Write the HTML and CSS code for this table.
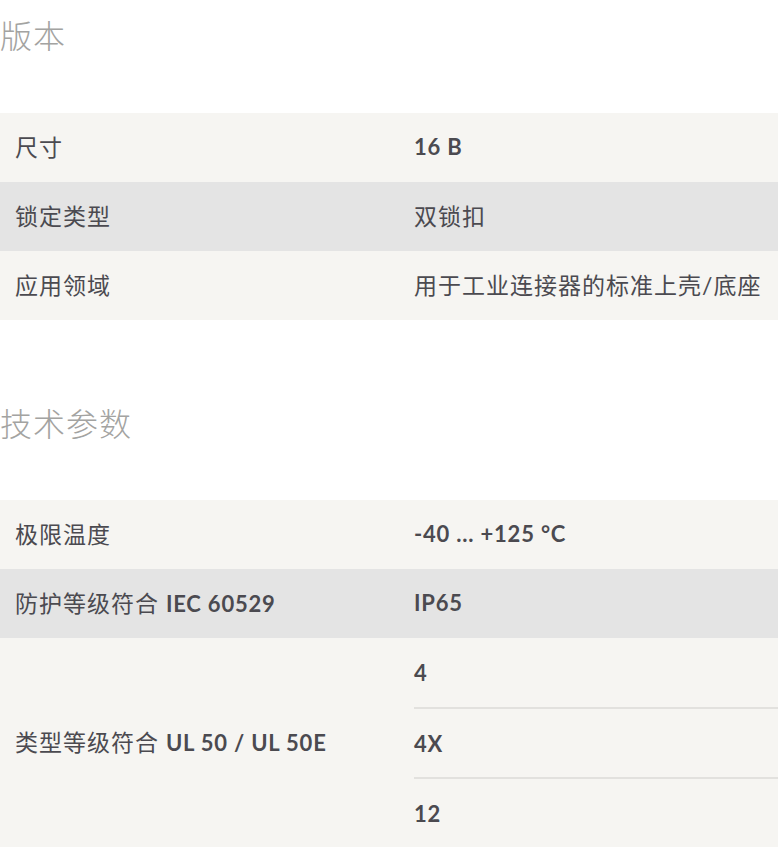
FILE: index.html
```html
<!DOCTYPE html>
<html lang="zh-CN">
<head>
<meta charset="utf-8">
<title>版本 / 技术参数</title>
<link rel="stylesheet" href="styles.css">
</head>
<body>
<section class="section">
  <h2 class="section-title first">版本</h2>
  <div class="spec-table">
    <div class="row odd">
      <div class="label">尺寸</div>
      <div class="value"><span class="lat">16 B</span></div>
    </div>
    <div class="row even">
      <div class="label">锁定类型</div>
      <div class="value">双锁扣</div>
    </div>
    <div class="row odd">
      <div class="label">应用领域</div>
      <div class="value">用于工业连接器的标准上壳/底座</div>
    </div>
  </div>
</section>
<section class="section">
  <h2 class="section-title">技术参数</h2>
  <div class="spec-table">
    <div class="row odd">
      <div class="label">极限温度</div>
      <div class="value"><span class="lat">-40 ... +125 °C</span></div>
    </div>
    <div class="row even">
      <div class="label">防护等级符合 <span class="lat">IEC 60529</span></div>
      <div class="value"><span class="lat">IP65</span></div>
    </div>
    <div class="row odd multi">
      <div class="label">类型等级符合 <span class="lat">UL 50 / UL 50E</span></div>
      <div class="value-list">
        <div class="sub"><span class="lat">4</span></div>
        <div class="sub"><span class="lat">4X</span></div>
        <div class="sub"><span class="lat">12</span></div>
      </div>
    </div>
  </div>
</section>
</body>
</html>
```

FILE: styles.css
```css
html, body {
  margin: 0;
  padding: 0;
  background: #ffffff;
}
body {
  font-family: "Lato", "Noto Sans CJK SC", sans-serif;
  color: #4b4a50;
  font-size: 23px;
  letter-spacing: 1px;
}
.section-title {
  margin: 78px 0 54px;
  font-family: "Noto Sans CJK SC", sans-serif;
  font-weight: 300;
  font-size: 32px;
  line-height: 48px;
  letter-spacing: 1px;
  color: #a3a3a1;
}
.section-title.first {
  margin-top: 10px;
  margin-bottom: 55px;
}
.spec-table {
  display: flex;
  flex-direction: column;
}
.row {
  display: grid;
  grid-template-columns: 414px 1fr;
  align-items: center;
  min-height: 69px;
}
.row.odd { background: #f6f5f2; }
.row.even { background: #e4e4e4; }
.label {
  padding-left: 15px;
  padding-bottom: 4px;
  font-weight: 400;
}
.value {
  padding-bottom: 4px;
  font-weight: 400;
}
.lat {
  font-family: "Lato", sans-serif;
  font-weight: 700;
  font-size: 22px;
  letter-spacing: 0.8px;
}
.value-list {
  display: flex;
  flex-direction: column;
}
.sub {
  height: 69px;
  display: flex;
  align-items: center;
}
.sub + .sub {
  border-top: 2px solid #e2e1de;
  height: 68px;
}
```
